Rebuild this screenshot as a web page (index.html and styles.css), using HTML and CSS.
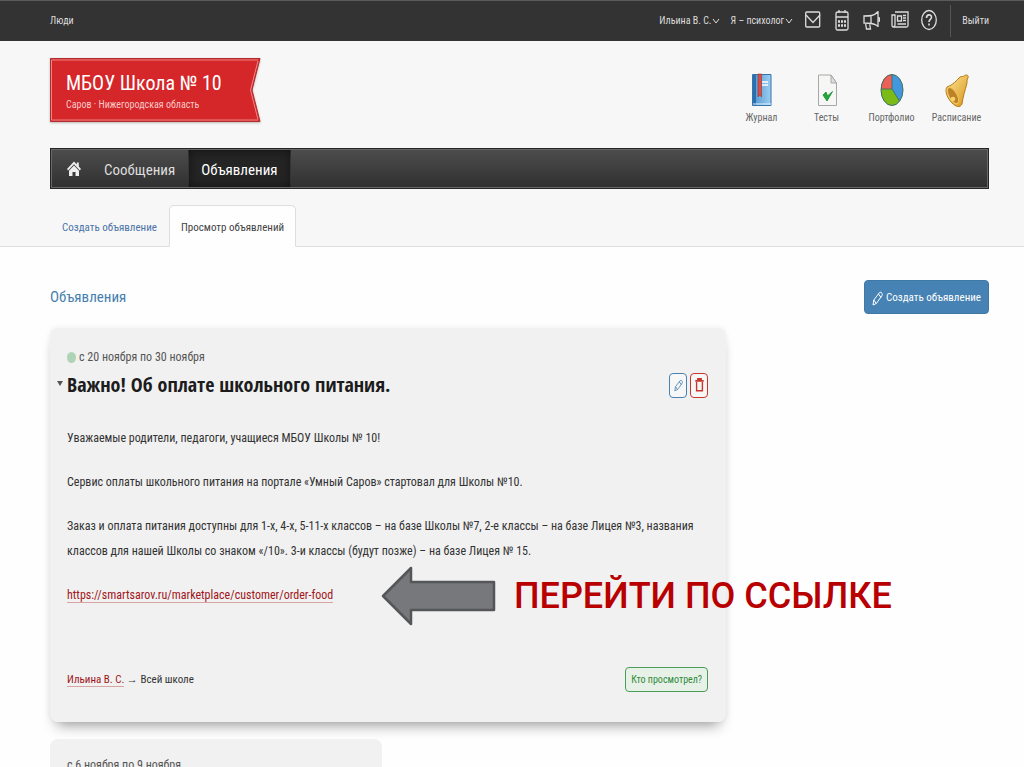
FILE: index.html
```
<!DOCTYPE html>
<html lang="ru">
<head>
<meta charset="utf-8">
<title>Объявления</title>
<link rel="stylesheet" href="styles.css">
</head>
<body>
<header class="topbar">
  <a href="#" class="top-link">Люди</a>
  <div class="top-right">
    <button class="drop">Ильина В. С.<svg width="8" height="8" viewBox="0 0 8 8"><path d="M1 2l3 4 3-4"/></svg></button>
    <button class="drop role">Я – психолог<svg width="8" height="8" viewBox="0 0 8 8"><path d="M1 2l3 4 3-4"/></svg></button>
    <nav class="top-icons">
      <a href="#" aria-label="Почта"><svg width="18" height="22" viewBox="0 0 18 22"><rect x="1.700" y="3" width="14" height="15" rx="1"/><path d="M2 6l7 7.500L16 6"/></svg></a>
      <a href="#" aria-label="Календарь"><svg width="18" height="22" viewBox="0 0 18 22"><rect x="3" y="3" width="12" height="18" rx="1.500"/><path d="M3 8h12M6 1v3M12 1v3"/><path d="M5 12.500h8M5 16.500h8" stroke-width="2.400" stroke-dasharray="2 1"/></svg></a>
      <a href="#" aria-label="Новости"><svg width="18" height="22" viewBox="0 0 18 22"><path d="M16 2v16M15.500 3C12 7 8 7 2 7v7c6 0 10 0 13.500 3M9 7v7M3.500 14l1 6h4l-1-6M16 9h1.500v3H16"/></svg></a>
      <a href="#" aria-label="Газета"><svg width="18" height="22" viewBox="0 0 18 22"><path d="M4 3h13v13.500q0 1.500-1.500 1.500h-13Q1 18 1 16V6h3v10q0 1.500-1.500 1.500"/><path d="M6.500 7h4v5h-4zM12 6.500h3M12 9h3M12 11.500h3M6.500 15h8.500"/></svg></a>
      <a href="#" aria-label="Помощь"><svg width="18" height="22" viewBox="0 0 18 22"><ellipse cx="9" cy="11" rx="7.300" ry="9.500"/><path d="M6.500 9c0-4 5-4 5-.7 0 2-2.500 2.200-2.500 4.700M9 14.500v2" stroke-width="1.600"/></svg></a>
    </nav>
    <a href="#" class="top-link exit">Выйти</a>
  </div>
</header>

<div class="head">
  <div class="brand-row">
    <div class="brand">
      <svg class="ribbon" viewBox="0 0 211 66" preserveAspectRatio="none" aria-hidden="true"><path d="M.5.5H210l-8 32 8 32H.5z" fill="#d52629" stroke="#b32a2e"/><path d="M1.500 2H208M1.500 2V63H208M208 3l-7.500 29.500 7.500 30" fill="none" stroke="#ee8785"/></svg>
      <div class="brand-name">МБОУ Школа № 10</div>
      <div class="brand-place">Саров · Нижегородская область</div>
    </div>
    <nav class="apps">
      <a href="#"><svg width="36" height="36" viewBox="0 0 36 36"><defs><linearGradient id="bk" x2="1"><stop stop-color="#4e94cf"/><stop offset="1" stop-color="#9ccdf0"/></linearGradient></defs><path d="M8.500 2.500h18.500v31H8.500z" fill="url(#bk)" stroke="#3574ad"/><path d="M9 3h3v30H9z" fill="#2c6fae"/><path d="M9 32h18" stroke="#e0eefa"/><path d="M18 10h6M18 13h6" stroke="#fff" stroke-width="1.500"/><path d="M14 2h3.500v23l-1.800-2-1.700 2z" fill="#d35148" stroke="#a52e2a" stroke-width=".6"/></svg>Журнал</a>
      <a href="#"><svg width="36" height="36" viewBox="0 0 36 36"><path d="M9.500 3H22l5.500 8v22.500h-18z" fill="#f6f6f4" stroke="#a8a8a8"/><path d="M22 3v8h5.500z" fill="#ddd" stroke="#a8a8a8"/><path d="M14 23l4 6 5.500-9.500-5 4.500-1.500-4z" fill="#20a83c" stroke="#118a2a" stroke-width=".8"/></svg>Тесты</a>
      <a href="#"><svg width="36" height="36" viewBox="0 0 36 36"><ellipse cx="18" cy="18" rx="11" ry="15.500" fill="#4397dd"/><path d="M18 17L7 17.500C7 9 11 2.500 18 2.500z" fill="#e96157"/><path d="M18 17H7c0 16 12 21 18.500 12z" fill="#7bbb18"/><path d="M18 2.500V17H7M18 17l7.500 12" fill="none" stroke="#416f63" stroke-width=".9"/><ellipse cx="18" cy="18" rx="11" ry="15.500" fill="none" stroke="#416f63"/></svg>Портфолио</a>
      <a href="#"><svg width="36" height="36" viewBox="0 0 36 36"><defs><linearGradient id="bl" x2="1" y2="1"><stop stop-color="#ffe79a"/><stop offset="1" stop-color="#d79416"/></linearGradient></defs><path d="M8 15c6-2 9-6 13-10 2-1 3 0 4-1 2-2 5-1 4 2-1 1-1 3-1 5-2 8-4 13-5 21-2 4-6 3-10-1S5 19 8 15z" fill="url(#bl)" stroke="#b57c1b"/><ellipse cx="14" cy="23.500" rx="4" ry="9" transform="rotate(-30 14 23.500)" fill="#bd8228" stroke="#efc75c"/><circle cx="14" cy="27" r="2.300" fill="#f5d26c"/></svg>Расписание</a>
    </nav>
  </div>
  <nav class="mainnav">
    <a href="#" class="home" aria-label="Главная"><svg width="14" height="16" viewBox="0 0 14 16"><path d="M7 .5L0 8l1.200 1.400L7 3.200l5.800 6.200L14 8l-2.200-2.400V1.500h-2v2z"/><path d="M2 9.800l5-5.300 5 5.300V15H8.500v-4h-3v4H2z"/></svg></a>
    <a href="#">Сообщения</a>
    <a href="#" class="active">Объявления</a>
  </nav>
  <nav class="tabs">
    <a href="#">Создать объявление</a>
    <a href="#" class="current">Просмотр объявлений</a>
  </nav>
</div>

<main class="main">
  <div class="title-row">
    <h1>Объявления</h1>
    <button class="create"><svg width="11" height="15" viewBox="0 0 11 15"><path d="M1 14l.8-5L7.500 1.500q1.500-1 2.500.8 .8 1.200-.2 2.500L4.300 12.500zM1.800 9l2.500 3.500M6.500 3l2.500 3.500"/></svg>Создать объявление</button>
  </div>

  <article class="card">
    <div class="date"><span class="dot"></span>с 20 ноября по 30 ноября</div>
    <div class="card-head">
      <h2><span class="caret"></span>Важно! Об оплате школьного питания.</h2>
      <div class="tools">
        <button class="edit" aria-label="Изменить"><svg width="9" height="13" viewBox="0 0 11 15"><path d="M1 14l.8-5L7.500 1.500q1.500-1 2.500.8 .8 1.200-.2 2.500L4.300 12.500zM1.800 9l2.500 3.500M6.500 3l2.500 3.500"/></svg></button>
        <button class="delete" aria-label="Удалить"><svg width="9" height="14" viewBox="0 0 9 14"><path d="M.3 2.800h8.400M3 2.500v-1.500h3v1.500" stroke-width="1.800"/><path d="M1.600 4v8.800h5.800V4" stroke-width="1.400"/></svg></button>
      </div>
    </div>
    <div class="text">
      <p>Уважаемые родители, педагоги, учащиеся МБОУ Школы № 10!</p>
      <p>Сервис оплаты школьного питания на портале «Умный Саров» стартовал для Школы №10.</p>
      <p>Заказ и оплата питания доступны для 1-х, 4-х, 5-11-х классов – на базе Школы №7, 2-е классы – на базе Лицея №3, названия классов для нашей Школы со знаком «/10». 3-и классы (будут позже) – на базе Лицея № 15.</p>
      <div class="link-row">
        <a href="#" class="red-link">https://smartsarov.ru/marketplace/customer/order-food</a>
        <div class="callout">
          <svg width="115" height="60" viewBox="0 0 115 60"><path d="M2 30L30 2v14h83v28H30v14z" fill="#77787b" stroke="#555658" stroke-width="2.500" stroke-linejoin="round"/></svg>
          <strong>ПЕРЕЙТИ ПО ССЫЛКЕ</strong>
        </div>
      </div>
    </div>
    <footer class="card-foot">
      <div><a href="#" class="red-link">Ильина В. С.</a> → Всей школе</div>
      <button class="viewed">Кто просмотрел?</button>
    </footer>
  </article>

  <article class="card small">
    <div class="date">с 6 ноября по 9 ноября</div>
  </article>
</main>
</body>
</html>
```
FILE: styles.css
```
* { box-sizing: border-box; }
body {
  margin: 0;
  background: #fefefe;
  color: #333;
  font: 12px/24px "Roboto Condensed", "Open Sans", sans-serif;
}
a { color: inherit; text-decoration: none; }
button { font: inherit; color: inherit; cursor: pointer; }
h1, h2, p { margin: 0; }
svg { fill: none; stroke: currentColor; }

.topbar {
  display: flex;
  justify-content: space-between;
  align-items: center;
  height: 41px;
  padding: 0 35px 0 50px;
  background: #333;
  border-top: 1px solid #575b5b;
  color: #ddd;
  font-size: 10px;
}
.top-right { display: flex; align-items: center; }
.drop {
  display: flex;
  align-items: center;
  gap: 1px;
  padding: 0;
  border: 0;
  background: none;
}
.role { margin-left: 10px; }
.top-icons { display: flex; gap: 11px; margin: 0 12px 2px 11px; }
.top-icons a { display: flex; }
.top-icons svg { stroke-width: 1.300; }
.exit { padding: 4px 0 4px 11px; border-left: 1px solid #555; }

.head {
  padding: 17px 35px 0 50px;
  background: #f7f7f7;
  border-bottom: 1px solid #ddd;
}
.brand-row { display: flex; justify-content: space-between; align-items: flex-start; }
.brand { position: relative; width: 211px; padding: 12px 16px 10px; color: #fff; }
.ribbon {
  position: absolute;
  inset: 0;
  width: 100%;
  height: 100%;
  filter: drop-shadow(0 1px 1px #bbb);
}
.brand-name { position: relative; font-size: 20px; line-height: 26px; }
.brand-place { position: relative; font-size: 10px; line-height: 17px; color: #f8c9c8; }
.apps { display: flex; padding-top: 14px; }
.apps a {
  display: flex;
  flex-direction: column;
  align-items: center;
  width: 65px;
  font-size: 10px;
  line-height: 20px;
  color: #666;
}
.apps svg { stroke: none; }

.mainnav {
  display: flex;
  height: 41px;
  margin-top: 20px;
  border: 1px solid #252525;
  box-shadow: inset 0 0 0 1px #686868;
  background: linear-gradient(#4d4d4d, #303030);
  color: #ddd;
  font-size: 15px;
}
.mainnav a { display: flex; align-items: center; padding: 2px 13px 0; }
.mainnav .home { padding: 0 10px 0 16px; }
.mainnav .home svg { fill: #eee; stroke: none; }
.mainnav .active {
  margin: 1px 0;
  background: #242424;
  box-shadow: inset 0 0 10px #111, inset 1px 0 #555, inset -1px 0 #555;
  color: #fff;
}
.tabs { display: flex; margin: 16px 0 -1px; color: #4b74a8; font-size: 11px; }
.tabs a { padding: 10px 11px 6px; border: 1px solid transparent; }
.tabs .current {
  background: #fefefe;
  border-color: #ddd;
  border-bottom-color: #fefefe;
  border-radius: 5px 5px 0 0;
  color: #444;
}

.main { padding: 33px 35px 0 50px; }
.title-row { display: flex; justify-content: space-between; align-items: center; }
h1 { font-size: 15px; font-weight: 400; color: #467fae; }
.create {
  display: flex;
  align-items: center;
  gap: 3px;
  height: 34px;
  padding: 2px 7px 0;
  border: 1px solid #4078a6;
  border-radius: 4px;
  background: #4682b4;
  color: #fff;
  font-size: 11px;
}
.card {
  width: 72%;
  margin-top: 14px;
  padding: 17px 18px 30px 17px;
  border-radius: 8px;
  background: #f1f1f1;
  box-shadow: 0 10px 14px -7px #999, 0 0 6px #eee;
}
.date { display: flex; align-items: center; gap: 3px; color: #555; }
.dot { width: 9px; height: 11px; border-radius: 50%; background: #aed4b5; }
.card-head { display: flex; justify-content: space-between; align-items: center; }
h2 {
  position: relative;
  font: bold 20px/32px "Open Sans Condensed", "Roboto Condensed", sans-serif;
  color: #1c1c1c;
}
.caret {
  position: absolute;
  left: -10px;
  top: 12px;
  border: 3px solid transparent;
  border-top: 5px solid #555;
  border-bottom: 0;
}
.tools { display: flex; gap: 3px; }
.tools button {
  display: flex;
  align-items: center;
  justify-content: center;
  width: 18px;
  height: 25px;
  padding: 0;
  border: 1px solid;
  border-radius: 4px;
  background: #f7f7f7;
}
.tools .edit { color: #4682b4; }
.tools .delete { color: #c8372b; }
.text {
  display: flex;
  flex-direction: column;
  gap: 19px;
  padding-top: 25px;
  line-height: 25px;
}
.link-row { position: relative; }
.red-link { color: #a01519; border-bottom: 1px solid #d8a3a3; }
.callout {
  position: absolute;
  left: 314px;
  top: -17px;
  display: flex;
  align-items: center;
  gap: 18px;
  white-space: nowrap;
}
.callout svg { flex: none; }
.callout strong { font: 500 36px/60px Roboto, sans-serif; color: #b90000; }
.card-foot {
  display: flex;
  justify-content: space-between;
  align-items: center;
  margin-top: 59px;
  font-size: 11px;
}
.viewed {
  height: 25px;
  padding: 1px 5px 0;
  border: 1px solid #4b9d57;
  border-radius: 4px;
  background: #e7f1e8;
  color: #2f8a3b;
  font-size: 10px;
  line-height: 20px;
}
.card.small { width: 35.4%; margin-top: 17px; padding: 14px 17px; box-shadow: none; }
```
